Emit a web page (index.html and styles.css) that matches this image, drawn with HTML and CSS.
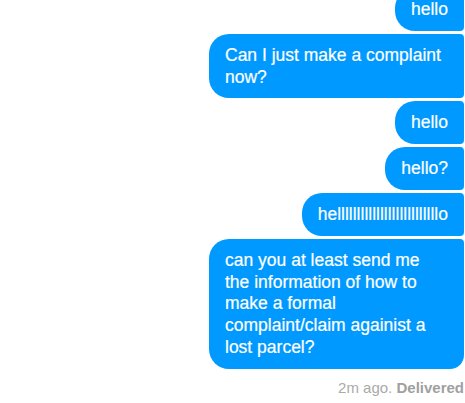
FILE: index.html
```html
<!DOCTYPE html>
<html>
<head>
<meta charset="utf-8">
<link rel="stylesheet" href="styles.css">
</head>
<body>
<div class="chat">
  <div class="bubble">hello</div>
  <div class="bubble">Can I just make a complaint now?</div>
  <div class="bubble">hello</div>
  <div class="bubble">hello?</div>
  <div class="bubble">hellllllllllllllllllllllllllo</div>
  <div class="bubble last">can you at least send me the information of how to make a formal complaint/claim againist a lost parcel?</div>
  <div class="status">2m ago. <b>Delivered</b></div>
</div>
</body>
</html>
```
FILE: styles.css
```css
html, body {
  margin: 0;
  padding: 0;
  background: #fff;
}
body {
  font-family: "Liberation Sans", Arial, sans-serif;
  width: 465px;
  height: 403px;
  overflow: hidden;
}
.chat {
  display: flex;
  flex-direction: column;
  align-items: flex-end;
  gap: 3px;
  margin-top: -12px;
  padding-right: 1px;
}
.bubble {
  box-sizing: border-box;
  max-width: 255px;
  background: #0099ff;
  color: #fff;
  font-size: 17.5px;
  line-height: 21.8px;
  padding: 11px 16px 10px 16px;
  border-radius: 20px 4px 4px 20px;
  -webkit-text-stroke: 0.2px #fff;
}
.bubble.last {
  border-bottom-right-radius: 14px;
}
.status {
  margin-top: 7px;
  font-size: 15px;
  line-height: 18px;
  color: #aaaaaa;
}
.status b {
  color: #a0a0a0;
  font-weight: bold;
}
```
